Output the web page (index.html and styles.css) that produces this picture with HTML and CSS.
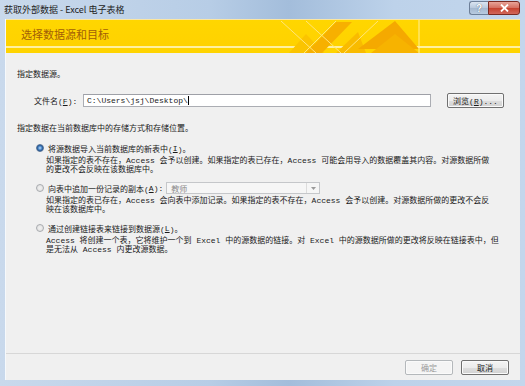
FILE: index.html
```html
<!DOCTYPE html>
<html>
<head>
    <title>获取外部数据 - Excel 电子表格</title>
    <link rel="stylesheet" href="styles.css">
</head>
<body>
    <div class="window">
        <div class="titlebar">
            <span class="title">获取外部数据 - Excel 电子表格</span>
            <div class="caption-buttons">
                <div class="cap-btn help">?</div>
                <div class="cap-btn close">
                    <svg width="9" height="8" viewBox="0 0 9 8"><path d="M1 0.5 L8 7.5 M8 0.5 L1 7.5" stroke="#fff" stroke-width="1.8"/></svg>
                </div>
            </div>
        </div>
        <div class="frame">
            <div class="banner">
                <svg class="banner-art" width="515" height="33" viewBox="0 0 515 33">
                    <!-- decoration on the right half of the banner -->
                    <polygon points="283,33 300,14 318,33" fill="#fbc400"/>
                    <polygon points="300,33 330,2 346,2 316,33" fill="#f7b000"/>
                    <polygon points="330,33 352,12 360,33" fill="#f9bb00"/>
                    <polygon points="352,29 389,1 413,29" fill="#f5a900"/>
                    <polygon points="365,33 389,14 413,33" fill="#f7b300"/>
                    <line x1="275" y1="1" x2="310" y2="33" stroke="#ffe57a" stroke-width="1"/>
                    <line x1="300" y1="1" x2="335" y2="33" stroke="#ffe57a" stroke-width="1"/>
                    <line x1="330" y1="1" x2="298" y2="33" stroke="#ffe57a" stroke-width="1"/>
                    <line x1="372" y1="1" x2="338" y2="33" stroke="#ffe57a" stroke-width="1"/>
                    <line x1="413" y1="0" x2="413" y2="33" stroke="#ffef9c" stroke-width="1"/>
                </svg>
                <span class="banner-text">选择数据源和目标</span>
            </div>

            <div class="content">
                <p class="section-label">指定数据源。</p>
                <div class="file-row">
                    <label class="file-label">文件名(<u>F</u>):</label>
                    <div class="textbox">C:\Users\jsj\Desktop\<span class="caret"></span></div>
                    <button class="btn browse">浏览(<u>R</u>)...</button>
                </div>

                <p class="section-label second">指定数据在当前数据库中的存储方式和存储位置。</p>

                <div class="option first">
                    <div class="option-head"><span class="radio checked"></span>将源数据导入当前数据库的新表中(<u>I</u>)。</div>
                    <p class="desc">如果指定的表不存在，Access 会予以创建。如果指定的表已存在，Access 可能会用导入的数据覆盖其内容。对源数据所做<br>的更改不会反映在该数据库中。</p>
                </div>

                <div class="option">
                    <div class="option-head"><span class="radio"></span>向表中追加一份记录的副本(<u>A</u>):
                        <div class="combo"><span>教师</span><span class="combo-arrow">
                            <svg width="5" height="3" viewBox="0 0 5 3"><polygon points="0,0 5,0 2.5,3" fill="#9a9a9a"/></svg>
                        </span></div>
                    </div>
                    <p class="desc">如果指定的表已存在，Access 会向表中添加记录。如果指定的表不存在，Access 会予以创建。对源数据所做的更改不会反<br>映在该数据库中。</p>
                </div>

                <div class="option">
                    <div class="option-head"><span class="radio"></span>通过创建链接表来链接到数据源(<u>L</u>)。</div>
                    <p class="desc">Access 将创建一个表，它将维护一个到 Excel 中的源数据的链接。对 Excel 中的源数据所做的更改将反映在链接表中，但<br>是无法从 Access 内更改源数据。</p>
                </div>
            </div>

            <div class="footer">
                <button class="btn disabled">确定</button>
                <button class="btn">取消</button>
            </div>
        </div>
    </div>
</body>
</html>
```

FILE: styles.css
```css
body {
    margin: 0;
    font-family: "Liberation Mono", "Noto Sans CJK SC", monospace;
    font-size: 8px;
    color: #1a1a1a;
    background: #bcd1e8;
}

.window {
    width: 525px;
    height: 386px;
    display: flex;
    flex-direction: column;
    background: linear-gradient(to right, #c9d9ec, #b7cde6 40%, #a3bddb 55%, #bdd2ea 75%, #c3d6ec);
}

/* title bar */
.titlebar {
    height: 19px;
    display: flex;
    align-items: flex-start;
    justify-content: space-between;
    padding-left: 4px;
    padding-right: 5px;
}

.title {
    font-family: "Noto Sans CJK SC", sans-serif;
    font-size: 9px;
    line-height: 19px;
    color: #1e1e1e;
}

.caption-buttons {
    display: flex;
    margin-top: 1px;
}

.cap-btn {
    height: 14px;
    box-sizing: border-box;
    display: flex;
    align-items: center;
    justify-content: center;
    border: 1px solid #6d7f98;
}

.help {
    width: 19px;
    border-radius: 3px 0 0 3px;
    border-right: none;
    background: linear-gradient(#dbe5f1, #b8c9dd 50%, #a4b8cf 51%, #b9cbe0);
    color: #fff;
    font-family: "Liberation Sans", sans-serif;
    font-weight: bold;
    font-size: 10px;
    text-shadow: 0 0 1px #33445a;
}

.close {
    width: 32px;
    border-radius: 0 3px 3px 0;
    border-color: #7a2a22;
    background: linear-gradient(#e8a498, #d46d5e 50%, #c5412e 51%, #d2675a);
}

/* client area */
.frame {
    flex: 1;
    display: flex;
    flex-direction: column;
    margin: 0 5px 6px 5px;
    background: #f0f0f0;
    border-left: 1px solid #f6f9fc;
}

.banner {
    position: relative;
    height: 34px;
    box-sizing: border-box;
    border-top: 1px solid #fbe6a2;
    background: linear-gradient(#ffd600, #ffd200 26px, #fff0a0 26px, #fff0a0 28px, #ffd400 28px);
}

.banner-art {
    position: absolute;
    top: 0;
    left: 0;
}

.banner-text {
    position: relative;
    display: block;
    padding: 6px 0 0 15px;
    font-family: "Noto Sans CJK SC", sans-serif;
    font-size: 11px;
    line-height: 16px;
    color: #a25f08;
}

.content {
    flex: 1;
    padding-left: 11px;
}

.section-label {
    margin: 17px 0 0 0;
    line-height: 10px;
}

.section-label.second {
    margin-top: 16px;
}

.file-row {
    display: flex;
    align-items: center;
    margin-top: 13px;
    padding-left: 17px;
    height: 15px;
}

.file-label {
    width: 49px;
}

.textbox {
    width: 348px;
    height: 13px;
    box-sizing: border-box;
    border: 1px solid #abadb3;
    border-top-color: #9ea0a7;
    background: #fff;
    padding-left: 3px;
    line-height: 11px;
    display: flex;
    align-items: center;
}

.caret {
    display: inline-block;
    width: 1px;
    height: 9px;
    background: #000;
}

.btn {
    height: 15px;
    width: 48px;
    padding: 0;
    box-sizing: border-box;
    font-family: "Liberation Mono", "Noto Sans CJK SC", monospace;
    font-size: 8px;
    color: #1a1a1a;
    border: 1px solid #707070;
    border-radius: 2px;
    background: linear-gradient(#f4f4f4, #ececec 50%, #dedede 51%, #d2d2d2);
    box-shadow: inset 0 0 0 1px #fafafa;
}

.btn.browse {
    width: 57px;
    margin-left: 16px;
}

.btn.disabled {
    color: #9a9a9a;
    border-color: #b4b8bb;
    background: #f4f4f4;
}

.option {
    margin-top: 8px;
    padding-left: 19px;
}

.option.first {
    margin-top: 8px;
}

.option-head {
    display: flex;
    align-items: center;
    height: 12px;
}

.radio {
    width: 8px;
    height: 8px;
    box-sizing: border-box;
    border-radius: 50%;
    border: 1px solid #a8abaf;
    background: radial-gradient(circle, #f2f2f2, #dcdcdc);
    margin-right: 4px;
}

.radio.checked {
    border-color: #4f6e93;
    background: radial-gradient(circle, #bfe0fb 0, #3f7cc0 2px, #1e4f8d 3px, #e9eef5 3.2px);
}

.combo {
    display: flex;
    align-items: center;
    justify-content: space-between;
    width: 154px;
    height: 12px;
    box-sizing: border-box;
    margin-left: 3px;
    border: 1px solid #c5c7ca;
    background: #f6f6f6;
    color: #8a8a8a;
    padding-left: 4px;
}

.combo-arrow {
    width: 12px;
    height: 10px;
    display: flex;
    align-items: center;
    justify-content: center;
    border-left: 1px solid #dcdcdc;
}

.desc {
    margin: 2px 0 0 10px;
    line-height: 9px;
    white-space: nowrap;
}

u {
    text-decoration: underline;
}

.footer {
    height: 27px;
    box-sizing: border-box;
    border-top: 1px solid #d7d7d7;
    display: flex;
    justify-content: flex-end;
    align-items: flex-start;
    gap: 8px;
    padding: 6px 11px 0 0;
}
```
